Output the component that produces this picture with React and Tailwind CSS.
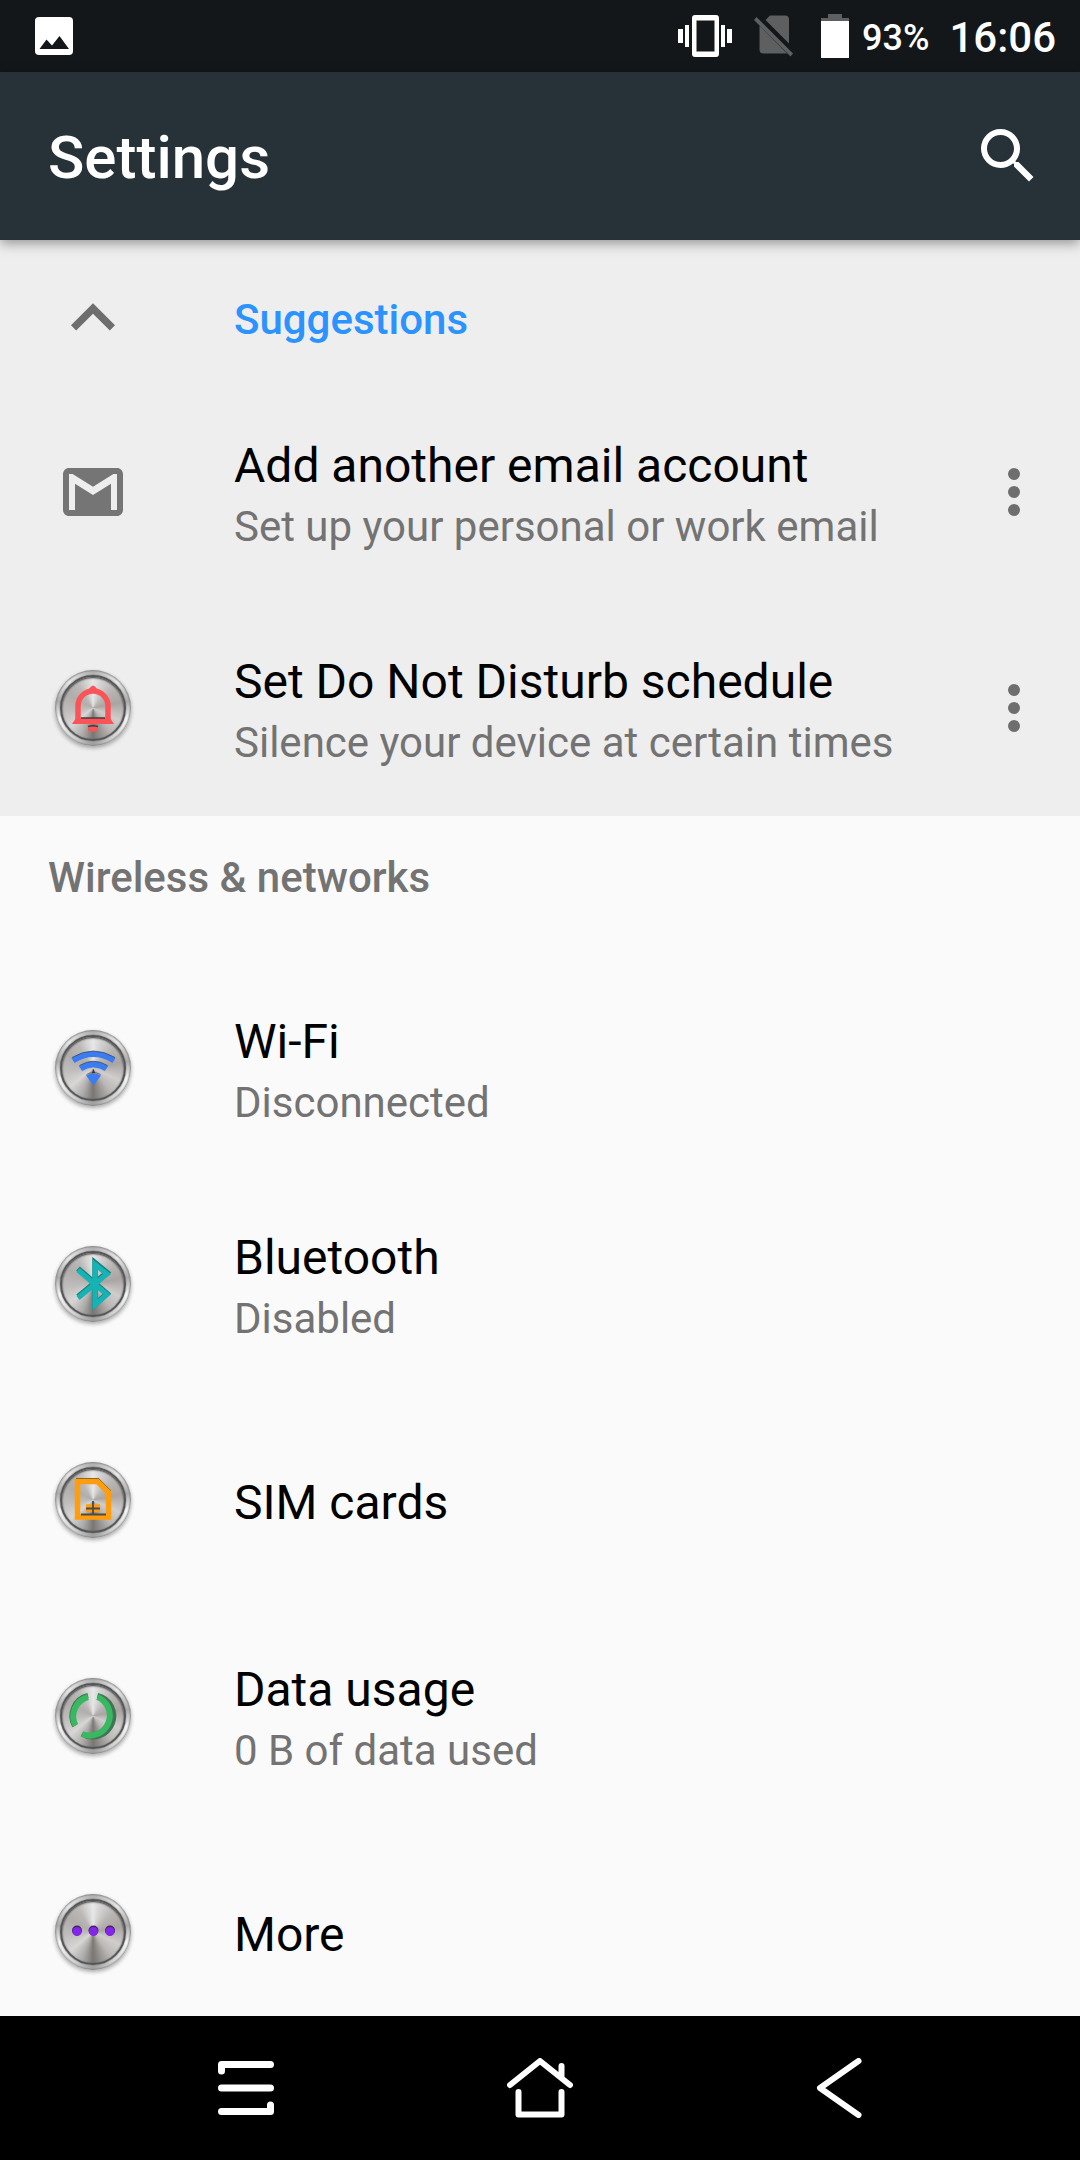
import { useState } from "react";

const SUGGESTIONS = [
  { id: "email", icon: "gmail", title: "Add another email account", summary: "Set up your personal or work email" },
  { id: "dnd", icon: "bell", title: "Set Do Not Disturb schedule", summary: "Silence your device at certain times" },
];

const NETWORKS = [
  { id: "wifi", icon: "wifi", title: "Wi-Fi", summary: "Disconnected" },
  { id: "bluetooth", icon: "bluetooth", title: "Bluetooth", summary: "Disabled" },
  { id: "sim", icon: "sim", title: "SIM cards" },
  { id: "data", icon: "data", title: "Data usage", summary: "0 B of data used" },
  { id: "more", icon: "more", title: "More" },
];

// drawn over the metal knob, centred on 39,39
const GLYPHS = {
  bell: (
    <>
      <path d="M24 51V37a15 15 0 0 1 30 0v14" fill="none" stroke="#fb5458" strokeWidth="5.500" />
      <path d="M35 20q4-7 8 0zM18 55l4-6h34l4 6z" fill="#fb5458" />
      <rect x="34" y="57.500" width="10" height="5" rx="2.500" fill="#fb5458" />
      <path d="M27 49h24M34 57.500q5-1.500 10 0" fill="none" stroke="#4a3a3a" strokeWidth="1.500" />
    </>
  ),
  wifi: (
    <>
      <path d="M19 31.500q20.500-13 41 0M26.500 39.500q13-8.500 26 0" fill="none" stroke="#3b7cf0" strokeWidth="6" />
      <path d="M32 46.500q7.500-4 15 0l-7.500 10z" fill="#3b7cf0" />
      <path d="M18 28.500q21.500-13 43 0M25.500 36.500q14-8.500 28 0M32.500 45.500q7-4 14 0" fill="none" stroke="#333" strokeOpacity=".6" strokeWidth="1" />
      <path d="M39.500 40l1.500 4h-3z" fill="#333" />
    </>
  ),
  bluetooth: (
    <>
      <path d="M24 23.500L53 48.500 41 59.500V17.500L53 27.500 24 51.500" fill="none" stroke="#1f7f80" strokeWidth="5.500" />
      <path d="M24 25L53 49.500 41 60V19.500L53 29 24 53" fill="none" stroke="#16b3b5" strokeWidth="5" />
    </>
  ),
  sim: (
    <>
      <path d="M22 18.500h22l12 12" fill="none" stroke="#6b5330" strokeWidth="3" />
      <path d="M23.500 20.500h20l11 11V56h-31z" fill="none" stroke="#ff9d0c" strokeWidth="5.500" />
      <path d="M32 45h14M32 49.500h14" stroke="#ff9d0c" strokeWidth="3.500" />
      <path d="M39 40v13M32 47.500h14M27 53.500h25" stroke="#4b4b4b" strokeWidth="1.800" />
    </>
  ),
  data: (
    <>
      <path d="M34 18.500A21 21 0 0 0 20.500 49M28 57A21 21 0 1 0 43.500 18.500" fill="none" stroke="#3f7554" strokeWidth="5" />
      <path d="M34 20A20 20 0 0 0 21.500 48.500M28 57A20 20 0 1 0 43.500 20" fill="none" stroke="#38b860" strokeWidth="6" />
    </>
  ),
  more: (
    <>
      <g fill="#43206e">
        <circle cx="23" cy="37.500" r="5" />
        <circle cx="39.500" cy="37.500" r="5" />
        <circle cx="56" cy="37.500" r="5" />
      </g>
      <g fill="#8426e6">
        <circle cx="23" cy="38.500" r="4.500" />
        <circle cx="39.500" cy="38.500" r="4.500" />
        <circle cx="56" cy="38.500" r="4.500" />
      </g>
    </>
  ),
};

function Knob({ glyph }) {
  return (
    <span className="grid size-[76px] place-items-center rounded-full bg-[conic-gradient(#b4b4b4,#f0f0f0_12%,#b0b0b0_22%,#ffffff_30%,#d2d2d2_42%,#a2a2a2_50%,#d2d2d2_58%,#ffffff_70%,#b0b0b0_78%,#f0f0f0_88%,#b4b4b4)] shadow-[inset_0_0_2px_1px_#858585,0_2px_4px_#00000055]">
      <span className="col-start-1 row-start-1 size-[66px] rounded-full border-2 border-[#55565a] bg-[conic-gradient(#e8e8e8,#d6d6d6_4%,#b8b5b3_13%,#aaa5a2_22%,#d0cecd_32%,#bab7b5_40%,#7a7672_50%,#aeacaa_56%,#d8d7d6_64%,#c0bebc_73%,#b0adab_83%,#bbb9b7_91%,#e8e8e8)] shadow-[0_0_2px_#666,inset_0_1px_2px_#333]" />
      <svg viewBox="1 1 76 76" className="col-start-1 row-start-1 size-[76px]" aria-hidden="true">
        {GLYPHS[glyph]}
      </svg>
    </span>
  );
}

function GmailIcon() {
  return (
    <svg viewBox="0 0 24 24" className="size-[72px]" aria-hidden="true">
      <path
        fill="#757575"
        d="M20 4H4c-1.100 0-2 .9-2 2v12c0 1.100.9 2 2 2h16c1.100 0 2-.9 2-2V6c0-1.100-.9-2-2-2zm0 14h-2V9.250L12 13 6 9.250V18H4V6h1.200l6.800 4.250L18.800 6H20v12z"
      />
    </svg>
  );
}

function SettingRow({ item, onMenu }) {
  return (
    <li className="flex h-[216px] items-center">
      <a href={`#${item.id}`} className="flex h-full min-w-0 flex-1 items-center">
        <span className="mr-12 grid w-[186px] shrink-0 place-items-center">
          {item.icon === "gmail" ? <GmailIcon /> : <Knob glyph={item.icon} />}
        </span>
        <span className="flex min-w-0 flex-col pt-[6px]">
          <span className="truncate text-[48px] leading-[64px] text-black">{item.title}</span>
          {item.summary ? (
            <span className="truncate text-[42px] leading-[58px] text-[#737373]">{item.summary}</span>
          ) : null}
        </span>
      </a>
      {onMenu ? (
        <button
          type="button"
          aria-label={`Options for ${item.title}`}
          onClick={() => onMenu(item.id)}
          className="grid h-full w-[132px] shrink-0 place-items-center"
        >
          <svg viewBox="0 0 24 24" className="size-[72px]" fill="#6e6e6e" aria-hidden="true">
            <circle cx="12" cy="6" r="2" />
            <circle cx="12" cy="12" r="2" />
            <circle cx="12" cy="18" r="2" />
          </svg>
        </button>
      ) : null}
    </li>
  );
}

function StatusBar() {
  return (
    <div className="flex h-[72px] shrink-0 items-center bg-[#13171a] pr-6 pl-[35px] font-medium text-white">
      <svg viewBox="0 0 38 38" className="size-[38px]" aria-label="Screenshot saved">
        <rect width="38" height="38" rx="4" fill="#fff" />
        <path d="M4.500 32L11.500 22.500 17 28.500 24.500 19 34 32z" fill="#13171a" />
      </svg>
      <div className="ml-auto flex items-center">
        <svg viewBox="0 0 54 42" className="h-[42px] w-[54px]" fill="#fff" aria-label="Vibrate">
          <path fillRule="evenodd" d="M17 0h21q3 0 3 3v36q0 3-3 3H17q-3 0-3-3V3q0-3 3-3zM18.500 5.500v31h18v-31z" />
          <path d="M0 14h5v14H0zM7 10h4v22H7zM43 10h4v22h-4zM49 14h5v14h-5z" />
        </svg>
        <svg viewBox="0 0 40 42" className="ml-[22px] h-[42px] w-[40px]" fill="#5d5f61" aria-label="No SIM">
          <path d="M11.500 5L16 0.500h15q4 0 4 4V28.500zM5.500 10.500L33 38.500H9.500q-4 0-4-4z" />
          <path d="M2.500 2L39 38.500 36.500 41.500 0 5z" />
        </svg>
        <svg viewBox="0 0 28 44" className="ml-[27px] h-[44px] w-[28px]" aria-label="Battery">
          <path d="M7 0h14v4h7v5H0V4h7z" fill="#5d5f61" />
          <path d="M0 7h28v37H0z" fill="#fff" />
        </svg>
        <span className="ml-[13px] pt-1 text-[36px] leading-[68px]">93%</span>
        <span className="ml-5 pt-1 text-[42px] leading-[68px]">16:06</span>
      </div>
    </div>
  );
}

function NavBar() {
  return (
    <nav className="grid h-[144px] shrink-0 grid-cols-[1fr_180px_1fr] items-center bg-black">
      <button type="button" aria-label="Recent apps" className="ml-auto mr-[176px]">
        <svg viewBox="0 0 56 54" className="h-[54px] w-[56px]" fill="none" stroke="#fff" strokeWidth="7" strokeLinecap="round" strokeLinejoin="round">
          <path d="M3.500 10v-6.500h49M3.500 27h49M3.500 50.500h49v-6.500" />
        </svg>
      </button>
      <button type="button" aria-label="Home" className="mx-auto">
        <svg viewBox="0 0 66 60" className="h-[60px] w-[66px]" fill="none" stroke="#fff" strokeWidth="6" strokeLinecap="round" strokeLinejoin="round">
          <path d="M3 27L33 3l30 24M54.500 8v12M11.500 34v22.500h43V34" />
        </svg>
      </button>
      <button type="button" aria-label="Back" className="mr-auto ml-[186px]">
        <svg viewBox="0 0 46 60" className="h-[60px] w-[46px]" fill="none" stroke="#fff" strokeWidth="6" strokeLinecap="round" strokeLinejoin="round">
          <path d="M42.500 3L4 30l38.500 27" />
        </svg>
      </button>
    </nav>
  );
}

export default function App() {
  const [expanded, setExpanded] = useState(true);
  const [menuFor, setMenuFor] = useState(null);

  function toggleMenu(id) {
    setMenuFor(menuFor === id ? null : id);
  }

  return (
    <div className="flex h-screen flex-col bg-[#fafafa] font-['Roboto',sans-serif]">
      <StatusBar />

      <header className="z-10 flex h-[168px] shrink-0 items-center justify-between bg-[#273238] pr-9 pl-12 shadow-[0_3px_12px_#00000066]">
        <h1 className="pt-1 text-[60px] leading-[72px] font-medium text-white">Settings</h1>
        <button type="button" aria-label="Search">
          <svg viewBox="0 0 24 24" className="size-[72px]" fill="#fff" aria-hidden="true">
            <path d="M15.500 14h-.790l-.280-.270A6.471 6.471 0 0 0 16 9.500 6.500 6.500 0 1 0 9.500 16c1.610 0 3.090-.590 4.230-1.570l.270.280v.790l5 4.990L20.490 19l-4.990-5zm-6 0C7.010 14 5 11.990 5 9.500S7.010 5 9.500 5 14 7.010 14 9.500 11.990 14 9.500 14z" />
          </svg>
        </button>
      </header>

      <main className="min-h-0 flex-1 overflow-y-auto [scrollbar-width:none]">
        <section className="bg-[#eeeeee]">
          <button
            type="button"
            aria-expanded={expanded}
            onClick={() => setExpanded(!expanded)}
            className="flex h-[144px] w-full items-center pt-3 text-left"
          >
            <span className="mr-12 grid w-[186px] shrink-0 place-items-center">
              <svg viewBox="0 0 24 24" className="size-[88px]" fill="#6e6e6e" aria-hidden="true">
                <path d="M12 8l-6 6 1.410 1.410L12 10.830l4.590 4.580L18 14z" />
              </svg>
            </span>
            <span className="pt-1 text-[42px] leading-[58px] font-medium text-[#2b93ff]">Suggestions</span>
          </button>
          {expanded ? (
            <ul>
              {SUGGESTIONS.map((s) => (
                <SettingRow key={s.id} item={s} onMenu={toggleMenu} />
              ))}
            </ul>
          ) : null}
        </section>

        <section>
          <h2 className="flex h-[144px] items-center px-12 pb-5 text-[42px] leading-[58px] font-medium text-[#737373]">
            Wireless &amp; networks
          </h2>
          <ul>
            {NETWORKS.map((n) => (
              <SettingRow key={n.id} item={n} />
            ))}
          </ul>
        </section>
      </main>

      <NavBar />
    </div>
  );
}
